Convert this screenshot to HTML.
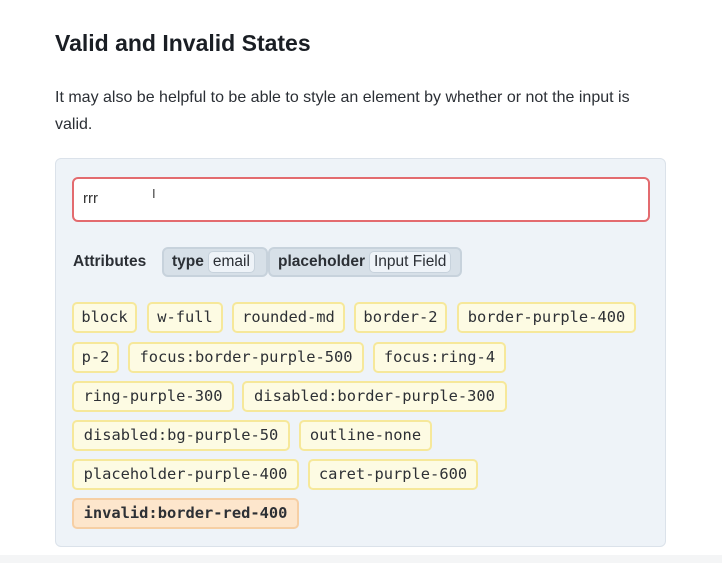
<!DOCTYPE html>
<html><head><meta charset="utf-8"><style>
body{margin:0;width:722px;height:563px;background:#fff;position:relative;overflow:hidden;font-family:"Liberation Sans",sans-serif;color:#1f2328}
.a{position:absolute;white-space:nowrap}
h1{position:absolute;left:55px;top:30px;margin:0;font-size:23px;font-weight:bold;color:#1a1e24}
.p{font-size:16px;color:#2b2f35}
.panel{position:absolute;left:55px;top:158px;width:611px;height:389px;background:#eef3f8;border:1px solid #dbe2ea;border-radius:6px;box-sizing:border-box}
.inp{position:absolute;left:72px;top:177px;width:578px;height:45px;border:2px solid #e36b6f;border-radius:6px;background:#fff;box-sizing:border-box}
.c{position:absolute;height:31px;box-sizing:border-box;border:2px solid #f6e89a;background:#fdfbe3;border-radius:5px;font-family:"DejaVu Sans Mono","Liberation Mono",monospace;font-size:15.4px;line-height:27px;text-align:center;color:#2d3035;white-space:nowrap;overflow:visible}
.inv{border-color:#f6cfa4;background:#fde6cc;font-weight:bold}
.at{position:absolute;top:247px;height:30px;box-sizing:border-box;background:#d7e0e8;border:2px solid #c7d2dc;border-radius:6px;font-size:15.5px;font-weight:bold;line-height:26px;padding-left:8px;color:#2b2f35;white-space:nowrap}
.at span{display:inline-block;background:#eef3f8;border:1.5px solid #c7d2dc;border-radius:5px;font-weight:normal;line-height:20px;padding:0 4px;margin-left:4px}
</style></head><body>
<h1>Valid and Invalid States</h1>
<div class="a p" style="left:55px;top:89px">It may also be helpful to be able to style an element by whether or not the input is</div>
<div class="a p" style="left:55px;top:116px">valid.</div>
<div class="panel"></div>
<div class="inp"></div>
<div class="a" style="left:83px;top:190px;font-size:15px;color:#333">rrr</div>
<div class="a" style="left:152px;top:186px;font-size:13px;color:#444">I</div>
<div class="a" style="left:73px;top:253px;font-size:15.5px;font-weight:bold;color:#2b2f35">Attributes</div>
<div class="at" style="left:162px;width:106px">type<span>email</span></div>
<div class="at" style="left:268px;width:194px">placeholder<span>Input Field</span></div>
<div class="c" style="left:72px;top:302px;width:65px">block</div>
<div class="c" style="left:147px;top:302px;width:76px">w-full</div>
<div class="c" style="left:232px;top:302px;width:113px">rounded-md</div>
<div class="c" style="left:354px;top:302px;width:93px">border-2</div>
<div class="c" style="left:457px;top:302px;width:179px">border-purple-400</div>
<div class="c" style="left:72px;top:342px;width:47px">p-2</div>
<div class="c" style="left:128px;top:342px;width:236px">focus:border-purple-500</div>
<div class="c" style="left:373px;top:342px;width:133px">focus:ring-4</div>
<div class="c" style="left:72px;top:381px;width:162px">ring-purple-300</div>
<div class="c" style="left:242px;top:381px;width:265px">disabled:border-purple-300</div>
<div class="c" style="left:72px;top:420px;width:218px">disabled:bg-purple-50</div>
<div class="c" style="left:299px;top:420px;width:133px">outline-none</div>
<div class="c" style="left:72px;top:459px;width:227px">placeholder-purple-400</div>
<div class="c" style="left:308px;top:459px;width:170px">caret-purple-600</div>
<div class="c inv" style="left:72px;top:498px;width:227px">invalid:border-red-400</div>
<div class="a" style="left:0;top:555px;width:722px;height:8px;background:#f4f5f6"></div>
</body></html>
